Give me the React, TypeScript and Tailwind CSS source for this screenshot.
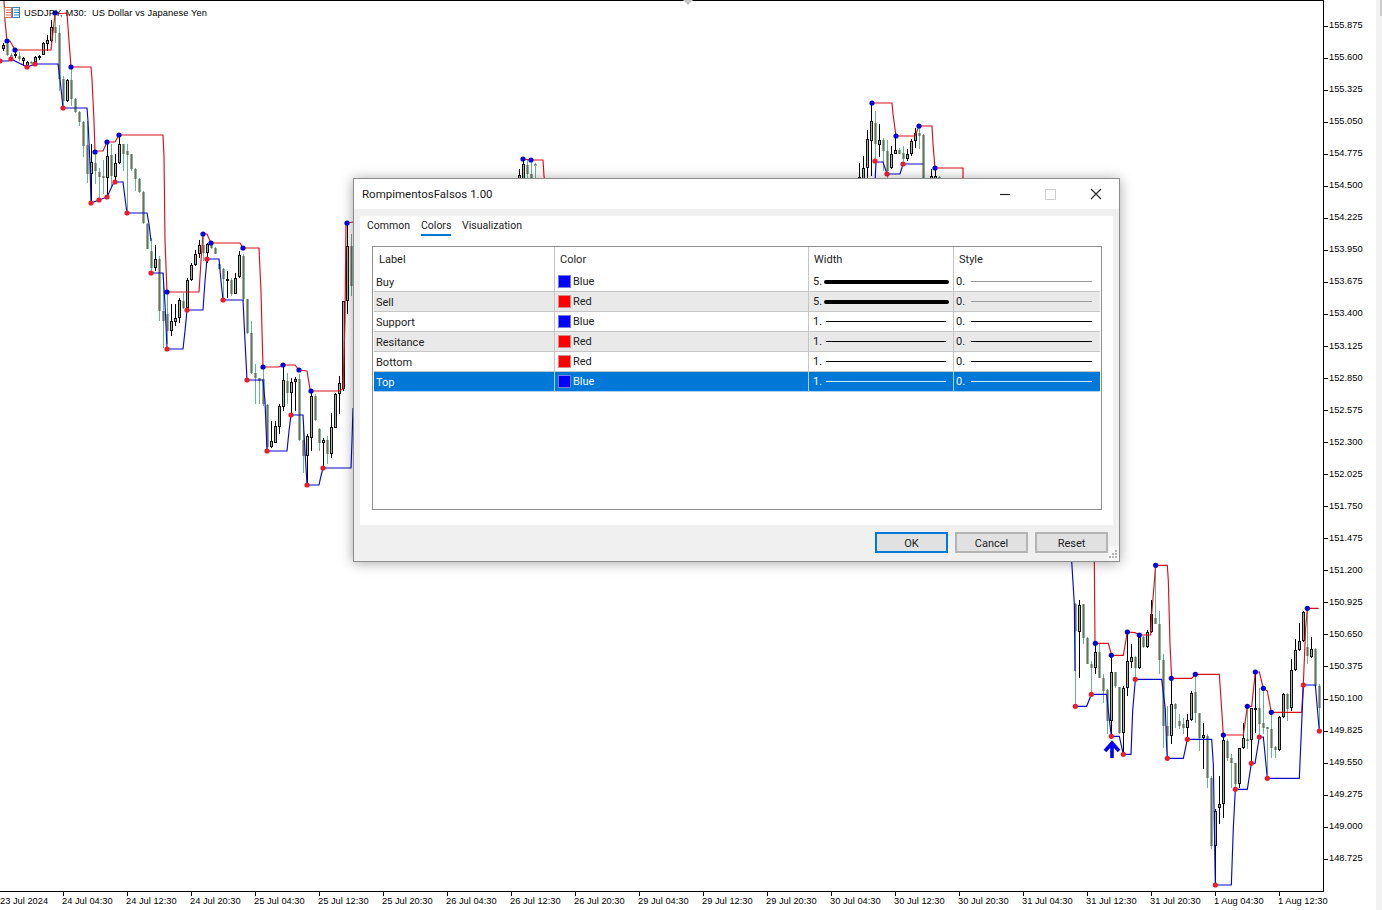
import React from "react";

type C = [number, number, number, number, number];
const mk = (start: number, rows: C[]) => rows.map((r, i) => ({ x: start + i * 4, hi: r[0], lo: r[1], top: r[2], bot: r[3], bull: r[4] === 1 }));

const candles = [
  ...mk(3, [
    [42,50,44,48,1],[40,55,43,54,0],[52,56,54,55,0],[50,57,53,55,1],[51,60,55,58,0],[56,64,57,60,1],[60,67,61,65,1],[60,63,61,62,0],[55,62,56,61,1],[54,59,55,56,1],
    [41,54,42,54,1],[34,50,39,43,1],[19,41,26,40,1],[15,42,26,32,0],[24,90,32,78,0],[75,105,78,100,0],[78,101,79,100,1],[66,105,79,98,0],[97,112,98,111,0],[110,125,111,121,0],
    [120,156,121,145,0],[120,182,144,173,0],[143,200,161,173,1],[150,183,162,170,0],[167,197,171,176,0],[159,193,175,177,0],[140,197,155,177,1],[143,187,154,175,0],[153,180,162,176,1],[135,163,143,162,1],
    [143,170,143,153,0],[143,212,150,154,0],[153,170,153,168,0],[167,190,168,178,0],[177,192,178,191,0],[190,223,191,222,0],[222,248,223,248,0],[237,270,250,267,0],[244,270,258,267,1],[255,320,258,310,0],
    [272,347,310,320,0],[292,343,313,330,0],[303,335,320,330,1],[303,325,317,321,1],[297,322,299,317,1],[292,308,300,307,0],[277,310,279,307,1],[262,280,264,279,1],[249,265,253,264,1],[239,257,244,253,1],
    [235,260,244,252,0],[242,262,243,252,1],[240,248,243,247,0],[246,253,247,253,0],[262,268,263,268,0],[267,297,268,278,0],[270,297,278,280,1],[277,295,279,293,0],[272,293,277,293,1],[250,277,254,276,1],
    [253,300,255,298,0],[298,333,298,332,0],[320,373,332,372,0],[363,403,372,377,0],[377,403,377,380,0],[367,405,378,403,0],[403,450,404,446,0],[420,447,440,446,1],[420,442,425,442,1],[403,433,405,426,1],
    [363,410,379,406,1],[372,403,380,392,0],[377,415,381,392,1],[376,410,378,381,1],[373,440,378,439,0],[423,472,439,455,0],[433,485,435,455,1],[390,450,395,437,1],[393,420,395,419,0],[427,450,428,442,0],
    [437,468,439,442,1],[435,463,439,453,0],[412,457,426,453,1],[392,427,393,427,1],[375,413,382,393,1],[300,390,300,388,1],[222,313,245,300,1],[233,295,245,285,0],
  ]),
  ...mk(519, [[168,182,174,182,1],[158,182,163,182,1],[158,182,164,173,0],[158,182,173,182,0],[162,182,163,164,0]]),
  ...mk(859, [
    [162,182,176,182,1],[155,182,167,182,1],[129,182,138,167,1],[102,175,120,140,1],[110,160,122,143,0],[123,156,139,144,1],[137,170,139,150,0],[139,178,150,170,0],[145,168,153,167,1],[135,153,149,153,1],
    [147,153,149,153,0],[145,165,152,158,0],[148,160,153,158,1],[138,155,140,153,1],[127,147,132,140,1],[125,148,132,135,0],[133,182,134,182,0],
  ]),
  ...mk(931, [[168,182,175,182,1],[167,182,175,182,1],[175,182,176,182,0]]),
  ...mk(1075, [
    [602,705,603,630,0],[599,677,604,631,1],[603,643,603,637,0],[636,663,637,663,0],[660,692,663,667,0],[643,673,651,667,1],[643,677,651,677,0],[673,702,677,690,0],[688,733,689,720,0],[655,735,671,720,1],
    [671,687,671,685,0],[686,733,686,732,0],[685,753,687,732,1],[632,695,660,687,1],[643,667,656,661,1],[655,677,656,667,0],[633,668,636,667,1],[635,647,636,646,0],[629,647,631,646,1],[599,632,613,631,1],
    [565,623,617,623,0],[610,673,623,659,0],[653,747,659,725,0],[705,757,725,735,0],[677,743,703,735,1],[702,727,703,708,0],[713,728,720,725,0],[717,733,723,727,0],[713,740,719,727,1],[690,720,692,719,1],
    [672,722,691,712,0],[712,750,712,737,0],[722,768,734,737,1],[733,787,735,777,0],[775,848,777,845,0],[808,883,810,845,1],[775,823,803,807,1],[733,817,739,803,1],[738,760,740,757,0],[753,787,757,762,0],
    [762,787,762,783,0],[747,787,747,783,1],[722,748,737,747,1],[705,748,738,740,0],[707,762,707,739,1],[670,732,707,708,1],[687,737,707,723,0],[685,733,722,727,0],[727,773,726,728,0],[712,757,728,747,0],
    [745,757,746,749,0],[715,750,716,749,1],[692,717,693,716,1],[692,720,693,708,0],[658,710,669,707,1],[638,670,649,669,1],[622,650,640,649,1],[610,641,611,640,1],[607,663,646,655,0],[636,657,648,656,1],
    [647,685,648,685,0],[683,727,685,707,0],
  ]),
];

type P = [number, number];
const z5 = (p: P[]): P[] => p.map(([x, y]) => [x / 3 + 1060, y / 3 + 560]);

const redLines: P[][] = [
  [[4,0],[5,20],[7,40],[10,40],[15,49],[51,49],[55,13],[67,12],[69,40],[71,66],[91,66],[92,78],[94,120],[95,150],[103,150],[107,141],[115,141],[119,134],[163,134],[164,155],[165,240],[167,291],[199,291],[201,260],[203,233],[207,233],[211,242],[240,242],[243,247],[259,247],[261,290],[262,330],[263,366],[279,366],[283,364],[295,364],[299,369],[307,370],[310,388],[311,390],[339,390],[343,388],[345,320],[346,222],[347,222],[353,221]],
  [[523,158],[531,159],[543,159],[544,175],[545,182]],
  [[872,102],[892,102],[893,113],[896,135],[915,135],[919,125],[932,125],[933,143],[935,167],[963,167],[963,182]],
  z5([[103,0],[105,247],[145,247],[155,283],[190,283],[202,213],[225,215],[238,222],[272,222],[275,160],[280,100],[287,13],[322,13],[325,60],[330,250],[335,352],[395,352],[406,340],[478,340],[482,400],[490,522],[550,522],[562,436],[575,436],[586,333],[598,333],[610,382],[622,390],[634,454],[725,454],[730,370],[737,200],[742,142],[776,142]]),
];
const blueLines: P[][] = [
  [[0,60],[9,60],[11,58],[15,60],[27,66],[35,63],[58,63],[60,78],[63,107],[87,107],[88,120],[90,163],[91,202],[99,199],[107,196],[113,183],[115,181],[123,181],[125,197],[127,212],[147,212],[149,223],[151,240]],
  [[151,272],[163,272],[165,303],[167,348],[183,348],[185,330],[187,309],[203,309],[205,280],[207,258],[219,258],[221,280],[223,299],[243,299],[245,340],[247,379],[263,379],[265,400],[267,450],[287,450],[289,430],[291,414],[303,414],[305,450],[307,484],[319,484],[321,475],[323,467],[351,467],[352,440],[353,407]],
  [[875,182],[876,161],[883,161],[887,173],[900,173],[903,163],[923,163]],
  z5([[35,0],[43,130],[45,330]]),
  z5([[46,436],[80,436],[94,400],[140,400],[145,450],[154,526],[178,526],[190,580],[213,580],[218,450],[226,355],[305,355],[316,445],[320,560],[322,592],[370,592],[382,535],[455,535],[460,610],[465,915],[466,972],[514,972],[520,800],[526,685],[562,685],[574,607],[585,607],[598,528],[610,528],[622,652],[718,652],[730,372],[766,372],[778,510]]),
];
const blueDots: P[] = [
  [7,40],[15,49],[55,12],[71,66],[95,151],[107,141],[119,134],[167,291],[203,233],[211,242],[243,247],[263,366],[283,364],[299,369],[311,390],[347,222],
  [523,158],[531,159],[872,102],[896,135],[919,125],[935,167],
  ...z5([[106,247],[154,283],[202,213],[238,222],[287,13],[334,352],[406,340],[490,522],[562,436],[586,333],[610,382],[634,454],[742,142]]),
];
const redDots: P[] = [
  [0,60],[11,58],[27,66],[35,63],[63,107],[91,202],[99,199],[107,196],[115,181],[127,212],[151,272],[167,348],[187,309],[207,258],[223,299],[247,379],[267,450],[291,414],[307,484],[323,467],
  [875,160],[887,173],[903,163],
  ...z5([[46,436],[94,400],[154,526],[190,580],[226,355],[322,592],[382,535],[466,972],[526,685],[574,607],[598,528],[622,652],[730,372],[778,510]]),
];
const pts = (p: P[]) => p.map((q) => q.join(",")).join(" ");

function Chart() {
  return (
    <svg width="1323" height="891" viewBox="0 0 1323 891" className="block">
      <g shapeRendering="crispEdges">
        {candles.map((c, i) =>
          c.bull ? (
            <g key={i}>
              <rect x={c.x} y={c.hi} width="1" height={c.lo - c.hi} fill="#000000" />
              <rect x={c.x - 1} y={c.top} width="3" height={Math.max(c.bot - c.top, 2)} fill="#111111" />
              <rect x={c.x} y={c.top + 1} width="1" height={Math.max(c.bot - c.top - 2, 0)} fill="#a3b3aa" />
            </g>
          ) : (
            <g key={i}>
              <rect x={c.x} y={c.hi} width="1" height={c.lo - c.hi} fill="#68b594" />
              <rect x={c.x - 1} y={c.top} width="3" height={Math.max(c.bot - c.top, 2)} fill="#84b9a1" />
              <rect x={c.x} y={c.top} width="1" height={Math.max(c.bot - c.top, 1)} fill="#8f5f55" />
            </g>
          )
        )}
      </g>
      {redLines.map((l, i) => (
        <polyline key={i} points={pts(l)} fill="none" stroke="#d8101c" strokeWidth="1.15" />
      ))}
      {blueLines.map((l, i) => (
        <polyline key={i} points={pts(l)} fill="none" stroke="#0808c8" strokeWidth="1.15" />
      ))}
      {blueDots.map(([x, y], i) => (
        <circle key={i} cx={x} cy={y} r="2.6" fill="#0505d8" />
      ))}
      {redDots.map(([x, y], i) => (
        <circle key={i} cx={x} cy={y} r="2.6" fill="#ec1c2c" />
      ))}
      <path d="M1112 757V743M1105 750L1112 742L1119 750" fill="none" stroke="#0000f5" strokeWidth="3.6" />
    </svg>
  );
}

const prices = ["155.875","155.600","155.325","155.050","154.775","154.500","154.225","153.950","153.675","153.400","153.125","152.850","152.575","152.300","152.025","151.750","151.475","151.200","150.925","150.650","150.375","150.100","149.825","149.550","149.275","149.000","148.725"];
const dates = ["24 Jul 04:30","24 Jul 12:30","24 Jul 20:30","25 Jul 04:30","25 Jul 12:30","25 Jul 20:30","26 Jul 04:30","26 Jul 12:30","26 Jul 20:30","29 Jul 04:30","29 Jul 12:30","29 Jul 20:30","30 Jul 04:30","30 Jul 12:30","30 Jul 20:30","31 Jul 04:30","31 Jul 12:30","31 Jul 20:30","1 Aug 04:30","1 Aug 12:30"];

const rows = [
  { label: "Buy", color: "Blue", w: 5, s: "#0000ff", b: "#7a7ae8" },
  { label: "Sell", color: "Red", w: 5, s: "#ff0000", b: "#d88a8a" },
  { label: "Support", color: "Blue", w: 1, s: "#0000ff", b: "#7a7ae8" },
  { label: "Resitance", color: "Red", w: 1, s: "#ff0000", b: "#d88a8a" },
  { label: "Bottom", color: "Red", w: 1, s: "#ff0000", b: "#d88a8a" },
  { label: "Top", color: "Blue", w: 1, s: "#0000ff", b: "#7a7ae8" },
];

function Row({ r, i }: { r: (typeof rows)[number]; i: number }) {
  const sel = i === 5;
  const bg = sel ? "bg-[#0078d7] text-[#f2f8fd] border-[#a9d3f2]" : i % 2 === 1 ? "bg-[#e9e9e9] text-[#222222] border-[#c6c6c6]" : "bg-white text-[#222222] border-[#c6c6c6]";
  const sep = sel ? "border-[#a9d3f2]" : "border-[#c6c6c6]";
  const line = sel ? "bg-[#cfe8fb]" : "bg-black";
  return (
    <div className={`flex h-5 border-b ${bg}`}>
      <div className="w-[180px] pl-[2px] leading-[21px]">{r.label}</div>
      <div className={`w-[254px] border-l ${sep} flex items-center pl-[3px]`}>
        <span className="w-[13px] h-[13px] border" style={{ backgroundColor: r.s, borderColor: r.b }} />
        <span className="ml-[2px] pt-[2px]">{r.color}</span>
      </div>
      <div className={`w-[145px] border-l ${sep} flex items-center pl-1`}>
        <span className="w-[11px] pt-[2px]">{r.w}.</span>
        {r.w === 5 ? (
          <span className="w-[125px] h-1 rounded-full bg-black" />
        ) : (
          <span className={`ml-[2px] w-[120px] h-px ${line}`} />
        )}
      </div>
      <div className={`w-[147px] border-l ${sep} flex items-center pl-[2px]`}>
        <span className="w-[15px] pt-[2px]">0.</span>
        <span className={`w-[121px] h-px ${r.w === 5 ? "bg-[#999999]" : line}`} />
      </div>
    </div>
  );
}

function Dialog() {
  return (
    <div className="absolute left-[353px] top-[178px] w-[767px] h-[384px] border border-[#8c8c8c] bg-[#f0f0f0] shadow-[0_1px_12px_rgba(0,0,0,0.35)] flex flex-col text-[11px] text-[#222222] font-['Roboto',sans-serif]">
      <div className="h-[30px] bg-white flex items-center pl-2">
        <span className="text-[11.5px] text-[#1a1a1a] flex-1 pt-[2px]">RompimentosFalsos 1.00</span>
        <svg width="120" height="30" viewBox="0 0 120 30" className="mr-0">
          <path d="M1 15.5H11" stroke="#222" strokeWidth="1.2" />
          <rect x="46.5" y="10.5" width="10" height="10" fill="none" stroke="#cfcfcf" />
          <path d="M92 10L102 20M102 10L92 20" stroke="#222" strokeWidth="1.1" />
        </svg>
      </div>
      <div className="flex-1 px-[6px] pt-[7px] flex flex-col">
        <div className="h-[309px] bg-white">
          <div className="flex h-5 pl-[7px] leading-[20px] text-[10.5px]">
            <span className="w-[54px]">Common</span>
            <span className="w-[30px] h-5 border-b-2 border-[#0078d7]">Colors</span>
            <span className="ml-[11px]">Visualization</span>
          </div>
          <div className="ml-3 mt-[10px] w-[730px] h-[264px] border border-[#8e8e8e] px-px">
            <div className="flex h-[25px] items-center">
              <div className="w-[180px] pl-[5px] pt-[2px]">Label</div>
              <div className="w-[254px] h-full border-l border-[#c6c6c6] flex items-center pl-[5px] pt-[2px]">Color</div>
              <div className="w-[145px] h-full border-l border-[#c6c6c6] flex items-center pl-[5px] pt-[2px]">Width</div>
              <div className="w-[147px] h-full border-l border-[#c6c6c6] flex items-center pl-[5px] pt-[2px]">Style</div>
            </div>
            {rows.map((r, i) => (
              <Row key={r.label} r={r} i={i} />
            ))}
          </div>
        </div>
        <div className="flex justify-end gap-[7px] pt-[7px] pr-[5px]">
          <button className="w-[73px] h-[21px] border-2 border-[#0078d7] bg-[#e1e1e1] pt-[2px]">OK</button>
          <button className="w-[73px] h-[21px] border-2 border-[#b4b4b4] bg-[#e1e1e1] pt-[2px]">Cancel</button>
          <button className="w-[73px] h-[21px] border-2 border-[#b4b4b4] bg-[#e1e1e1] pt-[2px]">Reset</button>
        </div>
      </div>
      <svg width="10" height="15" viewBox="0 0 10 15" className="absolute right-0 bottom-0">
        <rect width="10" height="15" fill="#f7f7f7" />
        <path d="M6 4h2v2H6zM3 7h2v2H3zM6 7h2v2H6zM0 10h2v2H0zM3 10h2v2H3zM6 10h2v2H6z" fill="#b5b5b5" />
      </svg>
    </div>
  );
}

export default function App() {
  return (
    <div className="relative w-[1382px] h-[910px] bg-white overflow-hidden flex text-[9.3px] text-black font-['Liberation_Sans',sans-serif]">
      <div className="w-[1376px] flex flex-col">
        <div className="flex h-[892px]">
          <div className="relative w-[1324px] h-[892px] border-t border-r border-b border-black">
            <Chart />
            <div className="absolute left-[3px] top-[4px] flex items-center">
              <svg width="18" height="13" viewBox="0 0 18 13">
                <rect x="1.5" y="1.5" width="7" height="10" fill="#fff" stroke="#d96a5a" />
                <rect x="9.5" y="1.5" width="7" height="10" fill="#fff" stroke="#2f86c5" />
                <path d="M3 4h5M3 6.5h5M3 9h5" stroke="#d96a5a" />
                <path d="M11 4h5M11 6.5h5M11 9h5" stroke="#2f86c5" />
              </svg>
              <span className="ml-[3px] whitespace-pre tracking-[0.1px] pt-[2px]">USDJPY, M30:  US Dollar vs Japanese Yen</span>
            </div>
          </div>
          <div className="pt-[10px] flex flex-col">
            {prices.map((p) => (
              <div key={p} className="h-[32.05px] flex items-center">
                <span className="w-1 h-px bg-black" />
                <span className="ml-px">{p}</span>
              </div>
            ))}
          </div>
        </div>
        <div className="flex h-[18px]">
          <div className="w-[62px] pt-[3px] whitespace-nowrap">23 Jul 2024</div>
          {dates.map((d) => (
            <div key={d} className="w-[64px] relative pt-[3px] whitespace-nowrap">
              <span className="absolute left-px top-0 w-px h-1 bg-black" />
              {d}
            </div>
          ))}
        </div>
      </div>
      <div className="w-[6px] h-[910px] bg-[#f2f2f2] flex justify-end">
        <div className="w-[2px] h-4 bg-[#cccccc]" />
      </div>
      <svg width="12" height="6" viewBox="0 0 12 6" className="absolute left-[682px] top-0">
        <path d="M1 0H11L6 5Z" fill="#c4c4c4" />
      </svg>
      <Dialog />
    </div>
  );
}
